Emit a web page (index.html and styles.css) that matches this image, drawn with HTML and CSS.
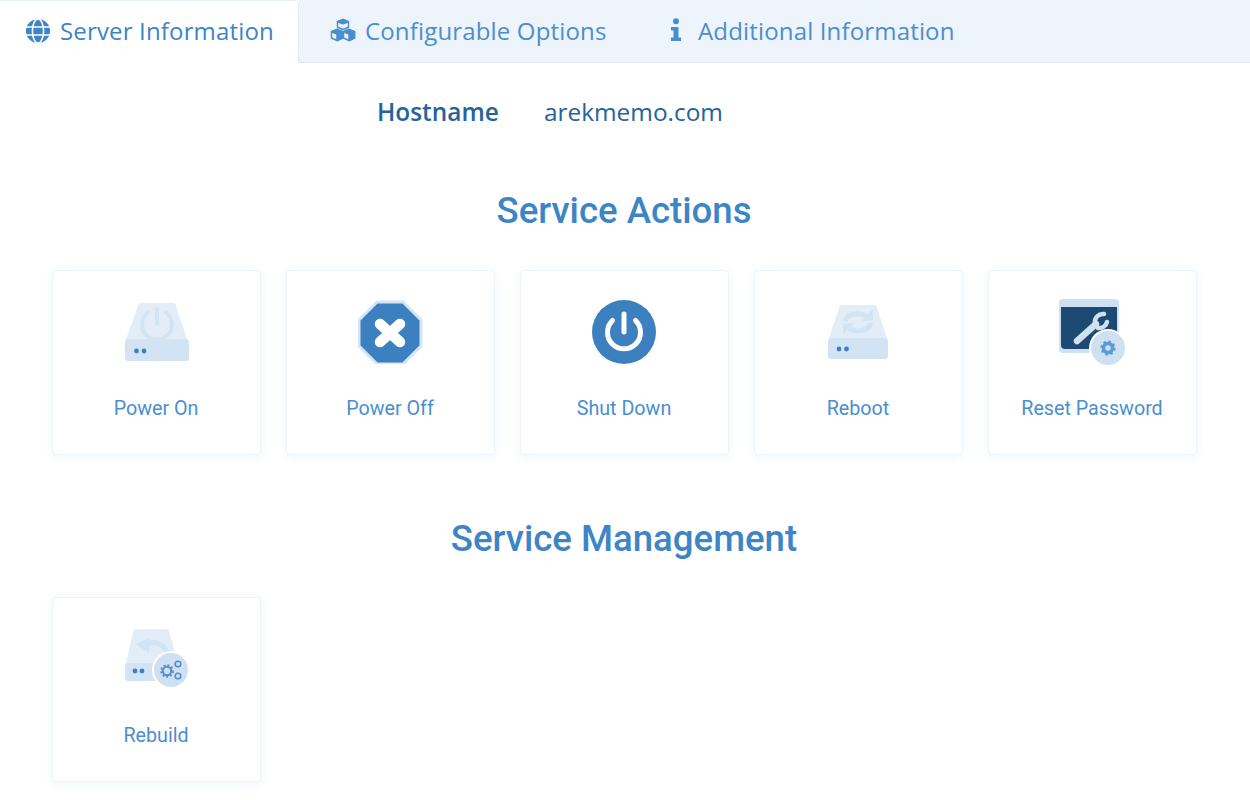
FILE: index.html
```html
<!DOCTYPE html>
<html lang="en">
<head>
<meta charset="utf-8">
<title>Server Information</title>
<link rel="stylesheet" href="styles.css">
</head>
<body>
<nav class="tabs">
  <a class="tab tab-active">
    <svg class="tab-icon" viewBox="0 0 24 24"><circle cx="12" cy="12" r="12" fill="#3d85c6"/><g fill="none" stroke="#fff" stroke-width="1.6"><ellipse cx="12" cy="12" rx="5.6" ry="12"/><path d="M0 8h24M0 16h24"/></g></svg>
    <span>Server Information</span>
  </a>
  <a class="tab">
    <svg class="tab-icon tab-icon-cubes" viewBox="0 0 26 23"><g fill="#4a8fcd" stroke="#4a8fcd" stroke-width="1.5" stroke-linejoin="round"><path d="M13 1l5.500 2.200v5.600L13 11 7.500 8.800V3.200z" fill="#eef4fc"/><path d="M7.500 3.200L13 5.400l5.500-2.200L13 1z"/><path d="M7 11l5.500 2.200v6.300L7 22l-5.500-2.500v-6.300z" fill="#eef4fc"/><path d="M7 15.500l5.500-2.300v6.300L7 22zM1.500 13.200L7 15.500l5.500-2.300L7 11z"/><path d="M19 11l5.500 2.200v6.300L19 22l-5.500-2.500v-6.300z" fill="#eef4fc"/><path d="M19 15.500l5.500-2.300v6.300L19 22zM13.500 13.200L19 15.500l5.500-2.300L19 11z"/></g></svg>
    <span>Configurable Options</span>
  </a>
  <a class="tab">
    <svg class="tab-icon tab-icon-info" viewBox="0 0 12 24"><circle cx="6" cy="3.200" r="3" fill="#4a8fcd"/><path d="M1 9h7.500v10.500H11V23H1v-3.500h2.500v-7H1z" fill="#4a8fcd"/></svg>
    <span>Additional Information</span>
  </a>
  <div class="tab-fill"></div>
</nav>

<div class="host-row">
  <span class="host-label">Hostname</span>
  <span class="host-value">arekmemo.com</span>
</div>

<h2 class="section-title title-actions">Service Actions</h2>
<div class="card-grid">
  <a class="card">
    <svg class="card-icon" viewBox="0 -2 66 64">
      <path d="M14 3a3 3 0 0 1 3-3h32a3 3 0 0 1 3 3l12 36H1z" transform="translate(0 1)" fill="#e2edf7"/>
      <path d="M1 40a4 4 0 0 1 4-3h56a4 4 0 0 1 4 3v16a3 3 0 0 1-3 3H4a3 3 0 0 1-3-3z" fill="#d2e3f3"/>
      <circle cx="12.500" cy="49" r="2.400" fill="#3d7fc0"/><circle cx="20" cy="49" r="2.400" fill="#3d7fc0"/>
      <path d="M24 10.500a15 15 0 1 0 18 0" fill="none" stroke="#d2e3f3" stroke-width="4" stroke-linecap="round"/>
      <path d="M33 7v15" stroke="#d2e3f3" stroke-width="4" stroke-linecap="round"/>
    </svg>
    <span>Power On</span>
  </a>
  <a class="card">
    <svg class="card-icon" viewBox="1 -1 66 64">
      <path d="M20 1h26l18 18v26L46 63H20L2 45V19z" fill="#3d80bf" stroke="#d5e5f4" stroke-width="3" stroke-linejoin="round"/>
      <path d="M23 23l20 18M43 23L23 41" stroke="#fff" stroke-width="10.500" stroke-linecap="round"/>
    </svg>
    <span>Power Off</span>
  </a>
  <a class="card">
    <svg class="card-icon" viewBox="1 0 66 64">
      <circle cx="33" cy="32" r="32" fill="#3d80bf"/>
      <path d="M21.500 20.500a16.500 16.500 0 1 0 23 0" fill="none" stroke="#fff" stroke-width="5" stroke-linecap="round"/>
      <path d="M33 14v18" stroke="#fff" stroke-width="5" stroke-linecap="round"/>
    </svg>
    <span>Shut Down</span>
  </a>
  <a class="card">
    <svg class="card-icon" viewBox="1 -4 66 64">
      <path d="M14 3a3 3 0 0 1 3-3h32a3 3 0 0 1 3 3l11 33H3z" transform="translate(0 1)" fill="#e2edf7"/>
      <path d="M3 37a4 4 0 0 1 4-3h52a4 4 0 0 1 4 3v15a3 3 0 0 1-3 3H6a3 3 0 0 1-3-3z" fill="#d2e3f3"/>
      <circle cx="14" cy="45" r="2.400" fill="#3d7fc0"/><circle cx="21.500" cy="45" r="2.400" fill="#3d7fc0"/>
      <path d="M20 17a13 10 0 0 1 23-3" fill="none" stroke="#d2e3f3" stroke-width="5"/><path d="M37 17l11-1V5z" fill="#d2e3f3"/>
      <path d="M46 19a13 10 0 0 1-23 4" fill="none" stroke="#d2e3f3" stroke-width="5"/><path d="M29 19l-11 1v11z" fill="#d2e3f3"/>
    </svg>
    <span>Reboot</span>
  </a>
  <a class="card">
    <svg class="card-icon card-icon-wide" viewBox="0 0 70 68">
      <rect x="1" y="0" width="60" height="54" rx="4" fill="#cfe0f1"/>
      <path d="M3 8h56v38a4 4 0 0 1-4 4H7a4 4 0 0 1-4-4z" fill="#1d4a72"/>
      <path d="M19 42l19-17" stroke="#cfe0f1" stroke-width="6.500" stroke-linecap="round"/>
      <path d="M37 24a8 8 0 0 1 9-9M40 29a8 8 0 0 0 9-6" fill="none" stroke="#cfe0f1" stroke-width="4.500" stroke-linecap="round"/>
      <circle cx="50" cy="49" r="19" fill="#fff"/><circle cx="50" cy="49" r="17" fill="#cfe0f1"/>
      <circle cx="50" cy="49" r="4.500" fill="none" stroke="#5a9ad6" stroke-width="3.500"/>
      <circle cx="50" cy="49" r="6.600" fill="none" stroke="#5a9ad6" stroke-width="2" stroke-dasharray="2.600 2.600"/>
    </svg>
    <span>Reset Password</span>
  </a>
</div>

<h2 class="section-title title-management">Service Management</h2>
<div class="card-grid">
  <a class="card">
    <svg class="card-icon" viewBox="0 -2 66 64">
      <path d="M9 1a3 3 0 0 1 3-3h30a3 3 0 0 1 3 3l11 36H1z" transform="translate(0 2)" fill="#e2edf7"/>
      <path d="M1 37a3 3 0 0 1 3-3h44v18H4a3 3 0 0 1-3-3z" fill="#d2e3f3"/>
      <circle cx="11" cy="42" r="2.400" fill="#3d7fc0"/><circle cx="18" cy="42" r="2.400" fill="#3d7fc0"/>
      <path d="M43 27a14 12 0 0 0-22-11" fill="none" stroke="#d2e3f3" stroke-width="5"/><path d="M11 15l14-6v15z" fill="#d2e3f3"/>
      <circle cx="47" cy="41" r="19" fill="#fff"/><circle cx="47" cy="41" r="17" fill="#cfe0f1"/>
      <circle cx="43" cy="42" r="4.200" fill="none" stroke="#4f8fcb" stroke-width="2"/>
      <circle cx="43" cy="42" r="6" fill="none" stroke="#4f8fcb" stroke-width="1.600" stroke-dasharray="2 2"/>
      <circle cx="54" cy="35" r="2.800" fill="none" stroke="#4f8fcb" stroke-width="1.600"/>
      <circle cx="54" cy="47" r="2.800" fill="none" stroke="#4f8fcb" stroke-width="1.600"/>
    </svg>
    <span>Rebuild</span>
  </a>
</div>
</body>
</html>
```
FILE: styles.css
```css
* { box-sizing: border-box; }
html, body { margin: 0; padding: 0; background: #fff; }
body { width: 1250px; height: 800px; overflow: hidden; font-family: Roboto, sans-serif; color: #3d85c6; }

.tabs { display: flex; height: 63px; }
.tab {
  display: flex; align-items: center; gap: 10px; height: 63px; padding: 0 0 2px 26px;
  font-family: "Open Sans", sans-serif; font-size: 24px; letter-spacing: .16px; white-space: nowrap;
  color: #4a8fcd; background: #eef4fc; border-bottom: 1px solid #dfeaf6;
}
.tab-active {
  width: 299px; color: #3d85c6; background: #fff; border-bottom-color: #fff;
  border-top: 1px solid #e6eff9; border-right: 1px solid #dfeaf6; border-radius: 0 5px 0 0;
  flex: none;
}
.tab:nth-child(2) { padding-left: 31px; gap: 9px; width: 340px; flex: none; }
.tab:nth-child(3) { padding-left: 31px; gap: 16px; flex: none; }
.tab-fill { flex: 1; background: #eef4fc; border-bottom: 1px solid #dfeaf6; }
.tab-icon { width: 24px; height: 24px; flex: none; }
.tab-icon-cubes { width: 26px; }
.tab-icon-info { width: 12px; }

.host-row { display: flex; height: 76px; padding: 20px 0 0 377px; align-items: center; font-family: "Open Sans", sans-serif; font-size: 24.4px; color: #24639b; }
.host-label { width: 167px; font-weight: 600; }
.host-value { font-weight: 400; }

.section-title { margin: 0; padding-right: 2px; text-align: center; font-family: Roboto, sans-serif; font-weight: 500; font-size: 36.6px; line-height: 44px; color: #3d85c6; }
.title-actions { padding-top: 50px; height: 131px; }
.title-management { padding-top: 62px; height: 142px; }

.card-grid { display: grid; grid-template-columns: repeat(5, 209px); column-gap: 25px; padding-left: 52px; }
.card {
  display: flex; flex-direction: column; align-items: center; height: 185px; padding-top: 29px;
  background: #fff; border: 1px solid #edf4fc; border-radius: 4px;
  box-shadow: 0 2px 10px rgba(120, 170, 225, .12);
  font-size: 19.7px; color: #4a8fcd;
}
.card-icon { width: 66px; height: 64px; flex: none; }
.card-icon-wide { width: 70px; height: 68px; margin: -1px 0 -3px 1px; }
.card span { margin-top: 33px; padding-right: 1px; line-height: 24px; }
```
